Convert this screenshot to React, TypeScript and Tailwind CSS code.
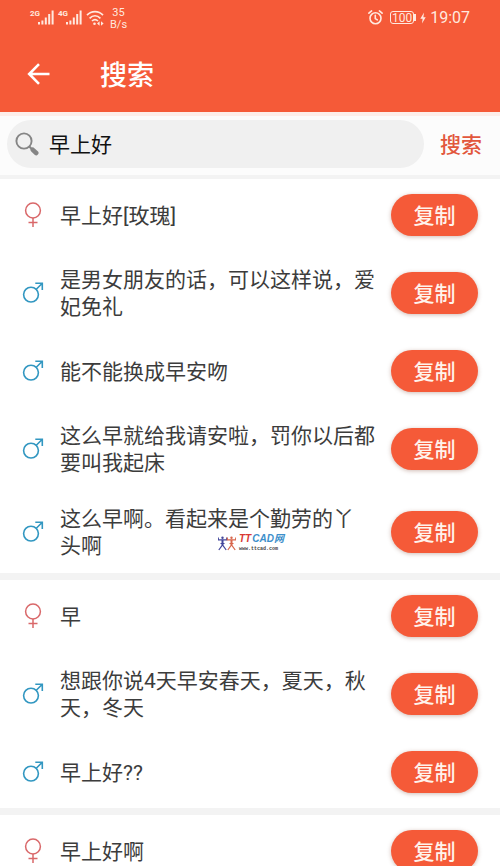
import { useState } from 'react';

type Gender = 'female' | 'male';

type Line = {
  gender: Gender;
  text: string;
  roomy?: boolean;
  watermark?: boolean;
};

const GROUPS: Line[][] = [
  [
    { gender: 'female', text: '早上好[玫瑰]' },
    { gender: 'male', text: '是男女朋友的话，可以这样说，爱妃免礼' },
    { gender: 'male', text: '能不能换成早安吻' },
    { gender: 'male', text: '这么早就给我请安啦，罚你以后都要叫我起床' },
    { gender: 'male', text: '这么早啊。看起来是个勤劳的丫\n头啊', roomy: true, watermark: true },
  ],
  [
    { gender: 'female', text: '早' },
    { gender: 'male', text: '想跟你说4天早安春天，夏天，秋天，冬天' },
    { gender: 'male', text: '早上好??' },
  ],
  [{ gender: 'female', text: '早上好啊' }],
];

function SignalIcon() {
  return (
    <svg width="16" height="15" viewBox="0 0 16 15" fill="currentColor" aria-hidden>
      <rect x="0" y="12" width="2" height="2.5" />
      <rect x="3.4" y="10.5" width="2" height="4" />
      <rect x="6.8" y="7.5" width="2" height="7" />
      <rect x="10.2" y="4" width="2" height="10.5" />
      <rect x="13.6" y="0.5" width="2" height="14" />
    </svg>
  );
}

function WifiIcon() {
  return (
    <svg width="18" height="16" viewBox="0 0 18 16" fill="none" stroke="currentColor" strokeWidth="1.7" aria-hidden>
      <path d="M1 5.2C5.5.4 12.5.4 17 5.2" />
      <path d="M3.6 8.3c3.2-3.2 7.6-3.2 10.8 0" />
      <path d="M6 11c1.8-1.7 4.2-1.7 6 0" />
      <circle cx="8.5" cy="13.8" r="1.3" fill="currentColor" stroke="none" />
      <path d="M11 13.5l2.600-2.200v4.400zM17.600 13.500l-2.600-2.200v4.400z" fill="currentColor" stroke="none" />
    </svg>
  );
}

function AlarmIcon() {
  return (
    <svg width="15" height="15" viewBox="0 0 15 15" fill="none" stroke="currentColor" strokeWidth="1.6" strokeLinecap="round" aria-hidden>
      <circle cx="7.5" cy="8.2" r="5.5" />
      <path d="M7.3 5.2v3.3l2 1.4M.9 3.2L3.600.9M14.1 3.2L11.400.9" />
    </svg>
  );
}

function BoltIcon() {
  return (
    <svg width="6" height="12" viewBox="0 0 6 12" fill="currentColor" aria-hidden>
      <path d="M4 .5L.3 6.800h2.300L2 11.500l3.700-6.300H3.400z" />
    </svg>
  );
}

function BackIcon() {
  return (
    <svg width="24" height="22" viewBox="0 0 24 22" fill="none" stroke="currentColor" strokeWidth="2.6" aria-hidden>
      <path d="M22.5 11H2.5M12 1.200L2.200 11l9.800 9.800" />
    </svg>
  );
}

function MagnifierIcon() {
  return (
    <svg width="24" height="24" viewBox="0 0 24 24" fill="none" stroke="#858585" aria-hidden>
      <circle cx="9" cy="9" r="7.6" strokeWidth="1.9" />
      <path d="M14.3 14.5l3.2 3.2" strokeWidth="2" />
      <path d="M17.8 17.8l3.4 3.2" strokeWidth="4.6" strokeLinecap="round" />
    </svg>
  );
}

function GenderIcon({ gender }: { gender: Gender }) {
  if (gender === 'female') {
    return (
      <svg width="22" height="26" viewBox="0 0 22 26" fill="none" stroke="#d9686a" strokeWidth="1.5" role="img" aria-label="女">
        <circle cx="11" cy="8.5" r="7.4" />
        <path d="M11 16v9M6.5 20.500h9" />
      </svg>
    );
  }
  return (
    <svg width="22" height="22" viewBox="0 0 22 22" fill="none" stroke="#3297c1" strokeWidth="1.6" role="img" aria-label="男">
      <circle cx="9" cy="12.600" r="7.400" />
      <path d="M14.300 7.300L20.300 1.200M13.300 1.200h7v6.800" />
    </svg>
  );
}

function Watermark() {
  return (
    <div className="pointer-events-none absolute top-[43px] left-[218px] flex items-center gap-[3px]" aria-hidden>
      <svg width="18" height="15" viewBox="0 0 18 15" fill="none" strokeWidth="1.2">
        <g stroke="#43479c">
          <circle cx="4.5" cy="1.8" r="1.2" fill="#43479c" stroke="none" />
          <path d="M.3 1.500v2.300h8.400V1.500M2.500 7.500h4" />
          <path d="M4.500 3.800v5.200" strokeWidth="2" />
          <path d="M4.500 8.800L.8 14M4.500 8.800L8.200 14" />
        </g>
        <g stroke="#d8674c">
          <circle cx="13.5" cy="1.8" r="1.2" fill="#d8674c" stroke="none" />
          <path d="M9.300 1.500v2.300h8.400V1.500M11.500 7.500h4" />
          <path d="M13.500 3.800v5.200" strokeWidth="2" />
          <path d="M13.500 8.800L9.800 14M13.500 8.800l3.700 5.200" />
        </g>
      </svg>
      <div className="flex flex-col gap-[2px] font-['Liberation_Sans','Noto_Sans_CJK_SC',sans-serif]">
        <div className="flex gap-px text-[10px] leading-[10px] font-bold whitespace-nowrap italic">
          <span className="text-[#d93a35]">TT</span>
          <span className="text-[#3d8fcb]">CAD网</span>
        </div>
        <span className="font-['Liberation_Mono',monospace] text-[5px] leading-[6px] font-bold whitespace-nowrap text-[#444]">
          www.ttcad.com
        </span>
      </div>
    </div>
  );
}

function ResultRow({ line }: { line: Line }) {
  return (
    <li
      className={`relative flex min-h-[72px] items-center px-[22px] ${line.roomy ? 'py-[13px]' : 'py-2'}`}
    >
      <span className="flex w-[22px] shrink-0 justify-center">
        <GenderIcon gender={line.gender} />
      </span>
      <p className="ml-4 min-w-0 flex-1 pt-[2px] text-[21px] leading-[27px] whitespace-pre-line text-[#3c3c3c]">
        {line.text}
      </p>
      <button
        type="button"
        onClick={() => void navigator.clipboard?.writeText(line.text)}
        className="ml-4 h-[42px] w-[87px] shrink-0 rounded-full bg-[#f55a38] pt-[2px] text-[21px] leading-[27px] font-medium text-[#fff3ec] shadow-[0_1px_4px_rgba(120,60,40,0.35)]"
      >
        复制
      </button>
      {line.watermark && <Watermark />}
    </li>
  );
}

export default function App() {
  const [query, setQuery] = useState('早上好');

  return (
    <div className="h-screen overflow-hidden bg-white font-[Roboto,'Noto_Sans_CJK_SC',sans-serif]">
      <header className="bg-[#f55a38] text-white">
        <div className="flex h-[35px] items-center px-[30px] text-[#ffe9df]">
          <span className="mb-2 w-2 font-['Liberation_Sans_Narrow',Roboto,sans-serif] text-[8px] leading-[10px] font-bold">
            2G
          </span>
          <SignalIcon />
          <span className="mb-2 ml-1 w-2 font-['Liberation_Sans_Narrow',Roboto,sans-serif] text-[8px] leading-[10px] font-bold">
            4G
          </span>
          <SignalIcon />
          <span className="ml-1">
            <WifiIcon />
          </span>
          <span className="ml-[6px] pt-[2px] text-center text-[11px] leading-[12px]">
            35
            <br />
            B/s
          </span>
          <span className="ml-auto">
            <AlarmIcon />
          </span>
          <span className="ml-[7px] flex h-[13px] w-6 items-center justify-center rounded-[3px] border border-current text-[12px] leading-[12px]">
            100
          </span>
          <span className="h-[7px] w-[2px] bg-current" />
          <span className="mr-1 ml-1">
            <BoltIcon />
          </span>
          <span className="text-[16px] leading-[20px]">19:07</span>
        </div>
        <div className="flex h-[77px] items-center pl-[27px]">
          <button type="button" aria-label="返回">
            <BackIcon />
          </button>
          <h1 className="ml-[49px] pt-1 text-[27px] leading-[36px] font-medium">搜索</h1>
        </div>
      </header>

      <form
        onSubmit={(e) => e.preventDefault()}
        className="flex items-center border-t-4 border-b-4 border-t-[#fdeeea] border-b-[#f3f3f3] bg-[#fcfcfc] pt-1 pr-[18px] pb-[7px] pl-[7px]"
      >
        <label className="flex h-12 min-w-0 flex-1 items-center rounded-full bg-[#f0f0f0] pr-4 pl-2">
          <MagnifierIcon />
          <input
            type="text"
            aria-label="搜索内容"
            value={query}
            onChange={(e) => setQuery(e.target.value)}
            className="ml-[10px] min-w-0 flex-1 bg-transparent pt-[2px] text-[21px] leading-[27px] text-[#111] outline-none"
          />
        </label>
        <button type="submit" className="ml-4 pt-[2px] text-[21px] leading-[27px] font-medium text-[#e2573c]">
          搜索
        </button>
      </form>

      <main>
        {GROUPS.map((group, i) => (
          <ul key={i} className="flex flex-col gap-[6px] border-b-[7px] border-[#f3f3f3]">
            {group.map((line) => (
              <ResultRow key={line.text} line={line} />
            ))}
          </ul>
        ))}
      </main>
    </div>
  );
}
